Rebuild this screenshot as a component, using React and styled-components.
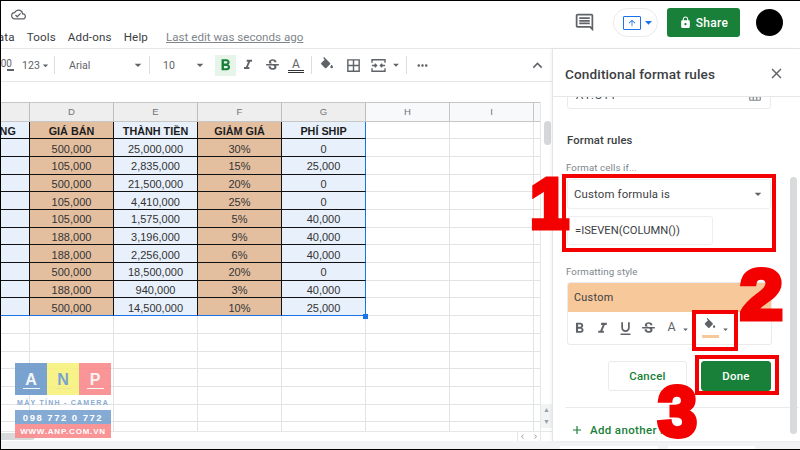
import React from 'react';
import styled, { createGlobalStyle } from 'styled-components';
import {
  MdOutlineCloudDone, MdOutlineComment, MdLock, MdFormatBold, MdFormatItalic, MdStrikethroughS,
  MdFormatUnderlined, MdBorderAll, MdMoreHoriz, MdKeyboardArrowUp, MdClose, MdAdd, MdArrowDropDown,
  MdGridOn, MdArrowUpward, MdChevronLeft, MdChevronRight,
} from 'react-icons/md';

const Global = createGlobalStyle`
  html, body { margin: 0; padding: 0; background: #fff; }
  * { box-sizing: border-box; }
  body { font-family: Roboto, "Liberation Sans", sans-serif; }
`;

const Page = styled.div`
  position: relative; width: 800px; height: 450px; overflow: hidden; background: #fff;
  border-top: 1px solid #000; border-left: 1px solid #000; border-bottom: 1px solid #000;
  display: flex; flex-direction: column;
`;
const TopBar = styled.header`
  height: 48px; flex: none; display: flex; justify-content: space-between;
  border-bottom: 1px solid #e6e7e8;
`;
const TitleArea = styled.div`display: flex; flex-direction: column; padding-left: 10px;`;
const CloudIcon = styled(MdOutlineCloudDone)`font-size: 15px; color: #5f6368; margin-top: 6px;`;
const MenuRow = styled.nav`
  display: flex; align-items: center; margin: 6px 0 0 -21px; height: 18px;
  font-size: 11.6px; color: #3c4043; letter-spacing: .15px; white-space: nowrap;
`;
const MenuItem = styled.span`margin-right: 12px;`;
const LastEdit = styled.span`
  margin-left: 6px; color: #80868b; text-decoration: underline; letter-spacing: 0;
`;
const Actions = styled.div`display: flex; align-items: center; padding-right: 17px; margin-top: -4px;`;
const CommentIcon = styled(MdOutlineComment)`font-size: 21px; color: #5f6368; margin-right: 18px;`;
const PresentPill = styled.div`
  width: 45px; height: 29px; border: 1px solid #e8eaed; border-radius: 15px;
  display: flex; align-items: center; padding-left: 9px; margin-right: 9px;
`;
const PresentBox = styled.span`
  width: 18px; height: 14px; border: 1.5px solid #1a73e8; border-radius: 1px;
  display: flex; align-items: center; justify-content: center; color: #1a73e8; font-size: 10px;
`;
const PresentCaret = styled(MdArrowDropDown)`font-size: 17px; color: #1a73e8; margin-left: -1px;`;
const ShareButton = styled.button`
  width: 73px; height: 29px; border: 0; border-radius: 3px; background: #188038; color: #fff;
  display: flex; align-items: center; justify-content: center; gap: 4px;
  font: 500 12px Roboto, sans-serif; letter-spacing: .3px; padding: 0; margin-right: 16px;
`;
const Avatar = styled.div`width: 27px; height: 27px; border-radius: 50%; background: #000;`;

const Body = styled.div`flex: 1; display: flex; min-height: 0;`;
const SheetColumn = styled.div`width: 551px; display: flex; flex-direction: column; flex: none; min-width: 0;`;
const Toolbar = styled.div`
  height: 33px; flex: none; display: flex; align-items: center; border-bottom: 1px solid #e6e7e8;
  color: #5f6368; font-size: 11px; position: relative;
`;
const ToolText = styled.span`
  width: ${p => p.$w}px; flex: none; color: #5f6368; font-size: 10.6px; white-space: nowrap;
`;
const Decimal = styled.span`
  width: 21px; height: 20px; flex: none; overflow: hidden; display: flex; flex-direction: column; align-items: flex-start;
  font-size: 10px; line-height: 11px; color: #5f6368; padding-top: 3px;
`;
const DecimalText = styled.span`margin-left: -3px;`;
const DecimalArrow = styled.span`
  width: 7px; height: 1.5px; background: #5f6368; margin: 0 0 0 6px; flex: none;
`;
const Sep = styled.span`
  width: 1px; height: 18px; background: #dadce0; flex: none; margin: 0 ${p => p.$mr}px 0 ${p => p.$ml}px;
`;
const Caret = styled(MdArrowDropDown)`
  font-size: ${p => p.$s || 16}px; color: #5f6368; flex: none;
`;
const BoldTool = styled.span`
  width: 21px; height: 21px; flex: none; background: #e6f4ea; color: #188038;
  display: flex; align-items: center; justify-content: center; font-size: 19px; margin-left: 7px;
`;
const ToolIcon = styled.span`
  width: ${p => p.$w || 24}px; flex: none; display: flex; align-items: center; justify-content: center;
  font-size: ${p => p.$s || 17}px; color: #5f6368;
`;
const TextColor = styled.span`
  width: 16px; margin: 0 4px; flex: none; display: flex; flex-direction: column; align-items: center;
  font-size: 12px; line-height: 12px; color: #5f6368; border-bottom: 3px double #333;
`;
const CollapseIcon = styled(MdKeyboardArrowUp)`
  font-size: 19px; color: #5f6368; position: absolute; right: 5px; top: 7px;
`;
const FormulaBar = styled.div`height: 20px; flex: none; background: #fff;`;

const SheetView = styled.div`flex: 1; display: flex; min-height: 0; overflow: hidden;`;
const GridClip = styled.div`width: 539px; flex: none; overflow: hidden;`;
const Grid = styled.div`
  margin-left: -55px; display: grid; width: 672px;
  grid-template-columns: repeat(8, 84px); grid-template-rows: 19.6px; grid-auto-rows: 17.7px; position: relative;
`;
const ColHead = styled.div`
  background: ${p => p.$on ? '#eeeeee' : '#f8f9fa'};
  border-top: 1px solid #c6c6c6; border-bottom: 1px solid #c6c6c6;
  border-right: 1px solid ${p => p.$on ? '#bdbdbd' : '#c6c6c6'};
  display: flex; align-items: center; justify-content: center;
  color: #70757a; font-size: 9.5px; font-family: "Liberation Sans", sans-serif;
`;
const Cell = styled.div`
  background: ${p => p.$bg || '#fff'};
  border-right: 1px solid ${p => p.$rc || '#e2e3e3'};
  border-bottom: 1px solid ${p => p.$bc || '#e2e3e3'};
  display: flex; align-items: center; justify-content: center; white-space: nowrap;
  padding: 2px ${p => p.$pr || 0}px 0 0;
  font: ${p => p.$bold ? 'bold 10.8px' : '11px'} "Liberation Sans", sans-serif;
  color: ${p => p.$bold ? '#1c1c1c' : '#333'};
`;
const Handle = styled.span`
  position: absolute; left: 417px; top: 212px; width: 5px; height: 5px; background: #1a73e8;
`;
const ScrollTrack = styled.div`
  width: 12px; flex: none; background: #fff; border-left: 1px solid #e6e7e8; position: relative;
`;
const ScrollThumb = styled.div`
  position: absolute; left: 3px; top: 19px; width: 7px; height: 24px; border-radius: 4px; background: #d5d7d9;
`;
const ScrollArrows = styled.div`
  position: absolute; left: 0; top: 302px; width: 11px; font-size: 7px; line-height: 12px;
  color: #9aa0a6; text-align: center; background: #f1f3f4;
`;
const HScrollRow = styled.div`
  height: 10px; flex: none; display: flex; align-items: center; justify-content: space-between;
  border-top: 1px solid #e6e7e8; padding-right: 11px;
`;
const HThumb = styled.span`width: 34px; height: 7px; background: #d7d9db; border-radius: 0 4px 4px 0;`;
const HArrows = styled.span`
  width: 24px; height: 9px; border-left: 1px solid #e6e7e8; border-right: 1px solid #e6e7e8;
  display: flex; align-items: center; justify-content: space-between; color: #9aa0a6; font-size: 9px;
`;
const BottomBar = styled.footer`
  height: 8px; flex: none; background: #f1f3f4; display: flex; align-items: flex-end; padding-left: 559px; gap: 10px;
`;
const SheetTab = styled.span`
  width: ${p => p.$w}px; height: 3px; background: #fff; flex: none;
`;

const Panel = styled.aside`
  flex: 1; border-left: 1px solid #e4e5e6; display: flex; flex-direction: column; min-height: 0;
  overflow: hidden; position: relative; box-shadow: -1px 0 3px rgba(0,0,0,.06);
`;
const PanelHead = styled.div`
  height: 48px; flex: none; display: flex; align-items: center; justify-content: space-between;
  padding: 2px 15px 0 12px; font-size: 13.6px; font-weight: 500; color: #3c4043; letter-spacing: .12px;
  border-bottom: 1px solid #e6e7e8; background: #fff; position: relative; z-index: 1;
`;
const CloseIcon = styled(MdClose)`font-size: 17px; color: #5f6368;`;
const PanelBody = styled.div`
  flex: 1; padding: 0 0 0 14px; display: flex; flex-direction: column; min-height: 0; position: relative;
`;
const RangeBox = styled.div`
  width: 204px; height: 28px; margin-top: -16px; border: 1px solid #e8eaed; border-radius: 3px; flex: none;
  display: flex; align-items: center; justify-content: space-between; padding: 0 8px;
  font-size: 11px; color: #3c4043; letter-spacing: .8px;
`;
const RangeIcon = styled(MdGridOn)`font-size: 14px; color: #80868b;`;
const SectionTitle = styled.div`
  margin-top: 25px; font-size: 11.25px; font-weight: 500; color: #3c4043; line-height: 14px; letter-spacing: .15px;
`;
const FieldLabel = styled.div`
  margin-top: ${p => p.$mt}px; margin-left: -1px; font-size: 9.7px; color: #80868b; line-height: 12px; letter-spacing: .1px;
`;
const SelectBox = styled.div`
  width: 204px; height: 30px; margin-top: 5px; border: 1px solid #eceef0; border-radius: 3px; flex: none;
  display: flex; align-items: center; justify-content: space-between; padding: 0 4px 1px 6px;
  font-size: 11.4px; color: #3c4043; letter-spacing: .15px;
`;
const FormulaInput = styled.div`
  width: 146px; height: 29px; margin-top: 7px; border: 1px solid #eceef0; border-radius: 3px; flex: none;
  display: flex; align-items: center; padding-left: 7px; font-size: 11.2px; color: #3c4043;
`;
const StyleCard = styled.div`
  width: 205px; margin-top: 4px; border: 1px solid #e8eaed; border-radius: 3px; flex: none; overflow: hidden;
`;
const Preview = styled.div`
  height: 29px; background: #f6c89a; display: flex; align-items: center; padding-left: 6px;
  font-size: 10.8px; color: #3c4043; letter-spacing: .3px;
`;
const StyleTools = styled.div`
  height: 32px; display: flex; align-items: center; color: #5f6368;
`;
const StyleIcon = styled.span`
  width: 23px; display: flex; align-items: center; justify-content: center; flex: none;
  font-size: 17px; color: #5f6368;
`;
const StyleA = styled.span`font-size: 12.5px; width: 17px; margin-left: 3px; text-align: center; color: #5f6368; margin-top: -4px;`;
const FillTool = styled.span`
  width: 16px; margin-left: 11px; display: flex; flex-direction: column; align-items: center; flex: none;
`;
const FillBar = styled.span`width: 17px; height: 3px; background: #f6c89a; margin-top: 3px; flex: none;`;
const TinyCaret = styled(MdArrowDropDown)`
  font-size: 11px; color: #5f6368; margin: 3px 0 0 ${p => p.$ml || 0}px; flex: none;
`;
const ButtonRow = styled.div`width: 204px; margin-top: 16px; display: flex; justify-content: flex-end; gap: 14px; flex: none;`;
const CancelButton = styled.button`
  width: 79px; height: 30px; background: #fff; border: 1px solid #e8eaed; border-radius: 3px;
  color: #188038; font: 500 11.4px Roboto, sans-serif; letter-spacing: .3px; padding: 0;
`;
const DoneButton = styled(CancelButton)`
  width: 70px; background: #188038; border-color: #188038; color: #fff;
`;
const Divider = styled.div`height: 1px; background: #e8eaed; margin: 16px 0 0 -2px; flex: none; width: 234px;`;
const AddRow = styled.div`
  margin: 15px 0 0 3px; display: flex; align-items: center; gap: 6px; color: #188038;
  font-size: 11.5px; font-weight: 500; letter-spacing: .35px; white-space: nowrap; flex: none;
`;
const PanelScroll = styled.span`
  position: absolute; right: 3px; top: 80px; width: 7px; height: 257px; border-radius: 4px; background: #d8dadc;
`;

const RedBox = styled.div`
  position: absolute; left: ${p => p.$x}px; top: ${p => p.$y}px; width: ${p => p.$w}px; height: ${p => p.$h}px;
  border: 4px solid #f30000; z-index: 5;
`;
const Numeral = styled.span`
  position: absolute; left: ${p => p.$x}px; top: ${p => p.$y}px; z-index: 6; color: #f30000;
  font: bold 70px/1 "Liberation Sans", sans-serif; -webkit-text-stroke: 5px #f30000;
  transform: scaleX(${p => p.$sx || 1}); transform-origin: left center;
`;

const Logo = styled.div`
  position: absolute; left: 14px; top: 362px; width: 96px; z-index: 4; opacity: .92;
  display: flex; flex-direction: column; font-family: "Liberation Sans", sans-serif; font-weight: bold;
`;
const LogoTiles = styled.div`display: grid; grid-template-columns: repeat(3, 1fr);`;
const LogoTile = styled.span`
  height: 32px; background: ${p => p.$bg}; color: ${p => p.$c};
  display: flex; align-items: center; justify-content: center;
`;
const LogoLetter = styled.span`
  display: block; width: 17px; text-align: center; font-size: 16px; line-height: 15px; height: 17px;
  border-bottom: 1px solid ${p => p.$line}; margin-top: 3px;
`;
const LogoLine = styled.div`
  height: ${p => p.$h}px; background: ${p => p.$bg || 'transparent'}; color: ${p => p.$c};
  font-size: ${p => p.$s}px; letter-spacing: ${p => p.$ls}px; white-space: nowrap;
  display: flex; align-items: center; justify-content: center;
`;

const DATA = [
  ['500,000', '25,000,000', '30%', '0'],
  ['105,000', '2,835,000', '15%', '25,000'],
  ['500,000', '21,500,000', '20%', '0'],
  ['105,000', '4,410,000', '25%', '0'],
  ['105,000', '1,575,000', '5%', '40,000'],
  ['188,000', '3,196,000', '9%', '40,000'],
  ['188,000', '2,256,000', '6%', '40,000'],
  ['500,000', '18,500,000', '20%', '0'],
  ['188,000', '940,000', '3%', '40,000'],
  ['500,000', '14,500,000', '10%', '25,000'],
];
const TAN = '#e3bfa0';
const BLUE = '#e8f0fb';
const SEL = '#1a73e8';

function FillIcon({ size = 16 }) {
  return (
    <svg width={size} height={size} viewBox="0 0 24 24" fill="#5f6368">
      <path d="M16.56 8.94 7.62 0 6.21 1.41l2.38 2.38-5.15 5.15a1.49 1.49 0 0 0 0 2.12l5.5 5.5c.29.29.68.44 1.06.44s.77-.15 1.06-.44l5.5-5.5c.59-.58.59-1.53 0-2.12zM19 11.5s-2 2.17-2 3.5a2 2 0 0 0 4 0c0-1.33-2-3.5-2-3.5z" />
    </svg>
  );
}
function MergeIcon() {
  return (
    <svg width="15" height="13" viewBox="0 0 16 14" fill="none" stroke="#5f6368" strokeWidth="1.5">
      <path d="M1 4V.8h14V4M1 10v3.2h14V10M1 7h4M11 7h4M4 5l2 2-2 2M12 5l-2 2 2 2" />
    </svg>
  );
}

export default function App() {
  const rows = [];
  DATA.forEach((r, i) => {
    const last = i === DATA.length - 1;
    const bc = last ? SEL : '#111';
    rows.push(
      <Cell key={`c${i}`} $bg={BLUE} $rc="#111" $bc={bc} />,
      <Cell key={`d${i}`} $bg={TAN} $rc="#111" $bc={bc}>{r[0]}</Cell>,
      <Cell key={`e${i}`} $bg={BLUE} $rc="#111" $bc={bc}>{r[1]}</Cell>,
      <Cell key={`f${i}`} $bg={TAN} $rc="#111" $bc={bc}>{r[2]}</Cell>,
      <Cell key={`g${i}`} $bg={BLUE} $rc={SEL} $bc={bc}>{r[3]}</Cell>,
      <Cell key={`h${i}`} />, <Cell key={`i${i}`} />, <Cell key={`j${i}`} />,
    );
  });
  const empty = [];
  for (let i = 0; i < 8 * 7; i++) empty.push(<Cell key={`x${i}`} />);

  return (
    <Page>
      <Global />
      <TopBar>
        <TitleArea>
          <CloudIcon />
          <MenuRow>
            <MenuItem>Data</MenuItem>
            <MenuItem>Tools</MenuItem>
            <MenuItem>Add-ons</MenuItem>
            <MenuItem>Help</MenuItem>
            <LastEdit>Last edit was seconds ago</LastEdit>
          </MenuRow>
        </TitleArea>
        <Actions>
          <CommentIcon />
          <PresentPill>
            <PresentBox><MdArrowUpward /></PresentBox>
            <PresentCaret />
          </PresentPill>
          <ShareButton><MdLock size={13} />Share</ShareButton>
          <Avatar />
        </Actions>
      </TopBar>
      <Body>
        <SheetColumn>
          <Toolbar>
            <Decimal>
              <DecimalText>.00</DecimalText>
              <DecimalArrow />
            </Decimal>
            <ToolText $w={17}>123</ToolText>
            <Caret $s={13} />
            <Sep $ml={2} $mr={14} />
            <ToolText $w={61}>Arial</ToolText>
            <Caret />
            <Sep $ml={3} $mr={13} />
            <ToolText $w={29}>10</ToolText>
            <Caret />
            <BoldTool><MdFormatBold /></BoldTool>
            <ToolIcon $s={16}><MdFormatItalic /></ToolIcon>
            <ToolIcon><MdStrikethroughS /></ToolIcon>
            <TextColor>A</TextColor>
            <Sep $ml={3} $mr={3} />
            <ToolIcon><FillIcon /></ToolIcon>
            <ToolIcon $w={28}><MdBorderAll /></ToolIcon>
            <ToolIcon $w={22}><MergeIcon /></ToolIcon>
            <Caret $s={14} />
            <Sep $ml={3} $mr={3} />
            <ToolIcon $s={15}><MdMoreHoriz /></ToolIcon>
            <CollapseIcon />
          </Toolbar>
          <FormulaBar />
          <SheetView>
            <GridClip>
              <Grid>
                <ColHead $on />
                <ColHead $on>D</ColHead>
                <ColHead $on>E</ColHead>
                <ColHead $on>F</ColHead>
                <ColHead $on>G</ColHead>
                <ColHead>H</ColHead>
                <ColHead>I</ColHead>
                <ColHead />
                <Cell $bg={BLUE} $rc="#111" $bc="#111" $bold $pr={3}>SỐ LƯỢNG</Cell>
                <Cell $bg={TAN} $rc="#111" $bc="#111" $bold>GIÁ BÁN</Cell>
                <Cell $bg={BLUE} $rc="#111" $bc="#111" $bold>THÀNH TIỀN</Cell>
                <Cell $bg={TAN} $rc="#111" $bc="#111" $bold>GIẢM GIÁ</Cell>
                <Cell $bg={BLUE} $rc={SEL} $bc="#111" $bold>PHÍ SHIP</Cell>
                <Cell /><Cell /><Cell />
                {rows}
                {empty}
                <Handle />
              </Grid>
            </GridClip>
            <ScrollTrack>
              <ScrollThumb />
              <ScrollArrows>▲<br />▼</ScrollArrows>
            </ScrollTrack>
          </SheetView>
          <HScrollRow>
            <HThumb />
            <HArrows><MdChevronLeft /><MdChevronRight /></HArrows>
          </HScrollRow>
        </SheetColumn>
        <Panel>
          <PanelHead>
            Conditional format rules
            <CloseIcon />
          </PanelHead>
          <PanelBody>
            <RangeBox>A1:G11<RangeIcon /></RangeBox>
            <SectionTitle>Format rules</SectionTitle>
            <FieldLabel $mt={14}>Format cells if...</FieldLabel>
            <SelectBox>Custom formula is<Caret /></SelectBox>
            <FormulaInput>=ISEVEN(COLUMN())</FormulaInput>
            <FieldLabel $mt={21}>Formatting style</FieldLabel>
            <StyleCard>
              <Preview>Custom</Preview>
              <StyleTools>
                <StyleIcon><MdFormatBold /></StyleIcon>
                <StyleIcon><MdFormatItalic /></StyleIcon>
                <StyleIcon><MdFormatUnderlined /></StyleIcon>
                <StyleIcon><MdStrikethroughS /></StyleIcon>
                <StyleA>A</StyleA>
                <TinyCaret />
                <FillTool><FillIcon size={14} /><FillBar /></FillTool>
                <TinyCaret $ml={2} />
              </StyleTools>
            </StyleCard>
            <ButtonRow>
              <CancelButton>Cancel</CancelButton>
              <DoneButton>Done</DoneButton>
            </ButtonRow>
            <Divider />
            <AddRow><MdAdd size={14} />Add another rule</AddRow>
            <PanelScroll />
          </PanelBody>
        </Panel>
      </Body>
      <BottomBar>
        <SheetTab $w={98} />
        <SheetTab $w={87} />
      </BottomBar>
      <Logo>
        <LogoTiles>
          <LogoTile $bg="#6f9bcc" $c="#f4f6fa"><LogoLetter $line="#f4f6fa">A</LogoLetter></LogoTile>
          <LogoTile $bg="#f7f27e" $c="#6f9bcc"><LogoLetter $line="#e9e68e">N</LogoLetter></LogoTile>
          <LogoTile $bg="#f98b8f" $c="#fdf3f3"><LogoLetter $line="#fdf3f3">P</LogoLetter></LogoTile>
        </LogoTiles>
        <LogoLine $h={15} $c="#7fa5d0" $s={7} $ls={1.25}>MÁY TÍNH - CAMERA</LogoLine>
        <LogoLine $h={14} $bg="#7ba3d1" $c="#fff" $s={9.5} $ls={1.5}>098 772 0 772</LogoLine>
        <LogoLine $h={14} $bg="#f98b8f" $c="#fff" $s={8} $ls={0.8}>WWW.ANP.COM.VN</LogoLine>
      </Logo>
      <RedBox $x={561} $y={173} $w={214} $h={78} />
      <RedBox $x={691} $y={309} $w={46} $h={41} />
      <RedBox $x={694} $y={354} $w={84} $h={40} />
      <Numeral $x={529} $y={168}>1</Numeral>
      <Numeral $x={739} $y={259} $sx={1.1}>2</Numeral>
      <Numeral $x={657} $y={376}>3</Numeral>
    </Page>
  );
}
